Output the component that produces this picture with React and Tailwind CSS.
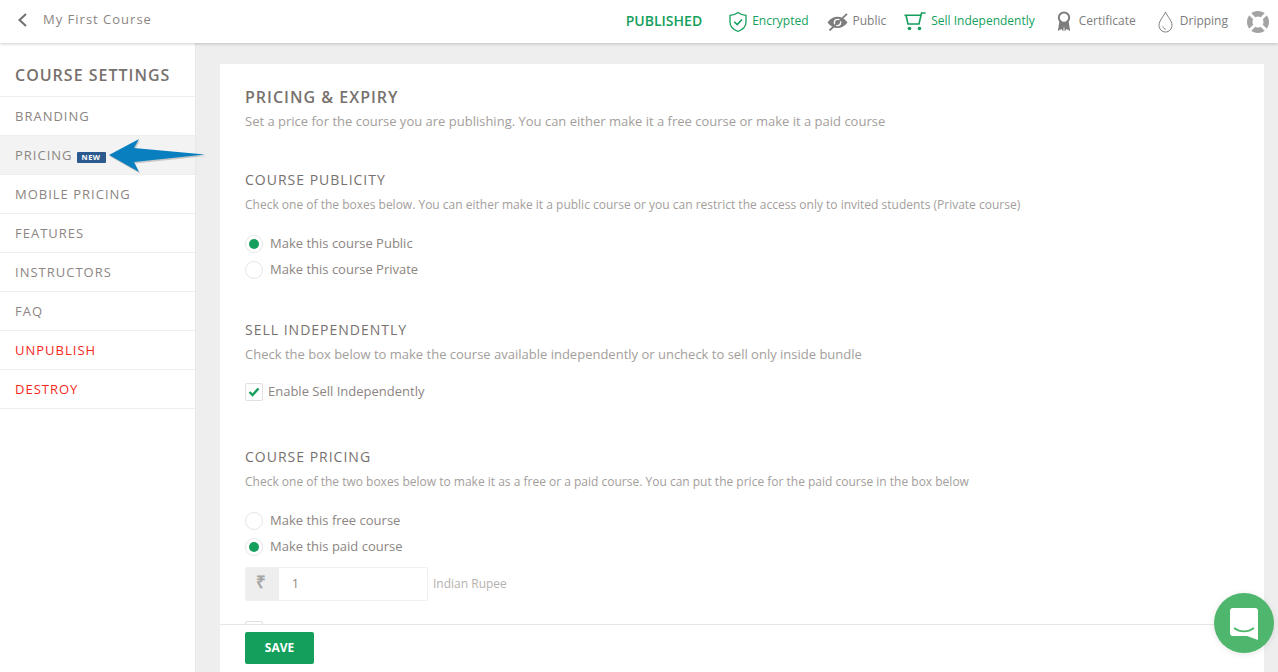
import React from 'react';

const GREEN = 'text-[#149f5c]';

const sideItems = [
  { label: 'BRANDING' },
  { label: 'PRICING', isNew: true, active: true },
  { label: 'MOBILE PRICING' },
  { label: 'FEATURES' },
  { label: 'INSTRUCTORS' },
  { label: 'FAQ' },
  { label: 'UNPUBLISH', danger: true },
  { label: 'DESTROY', danger: true },
];

const ShieldIcon = () => (
  <svg width="20" height="22" viewBox="0 0 20 22" fill="none" stroke="#149f5c" strokeWidth="1.3">
    <path d="M10 1.5 C7.5 3.5 5 4.2 2 4.4 V11 C2 15.5 5.5 18.8 10 20.5 C14.5 18.8 18 15.5 18 11 V4.4 C15 4.2 12.5 3.5 10 1.5 Z" />
    <path d="M6.2 10.8 L9.2 13.6 L14 8.4" strokeWidth="1.5" />
  </svg>
);

const EyeOffIcon = () => (
  <svg width="21" height="18" viewBox="0 0 21 18" fill="none">
    <path d="M0.5 9.5 C3.5 5.5 7 3.8 10.5 3.8 C14 3.8 17.5 5.5 20.5 9.5 C17.5 13.5 14 15 10.5 15 C7 15 3.5 13.5 0.5 9.5 Z" fill="#7d7d7d" />
    <circle cx="10.5" cy="9.5" r="3.8" fill="#fff" />
    <circle cx="10.5" cy="9.5" r="2.4" fill="#7d7d7d" />
    <path d="M2.5 17.5 L20 0.8" stroke="#7d7d7d" strokeWidth="1.8" />
  </svg>
);

const CartIcon = () => (
  <svg width="22" height="19" viewBox="0 0 22 19" fill="none" stroke="#149f5c" strokeWidth="1.6">
    <path d="M0.5 3.2 H17 L15 12 H4 L2 3.2" />
    <path d="M16.8 3.2 L17.6 1 H21.5" />
    <circle cx="5.5" cy="16.5" r="1.8" fill="#149f5c" stroke="none" />
    <circle cx="15.5" cy="16.5" r="1.8" fill="#149f5c" stroke="none" />
  </svg>
);

const RibbonIcon = () => (
  <svg width="14" height="21" viewBox="0 0 14 21" fill="none">
    <path d="M2.5 10 L0.8 20 L4.4 18 L6.2 20.6 L7 15 L7.8 20.6 L9.6 18 L13.2 20 L11.5 10 Z" fill="#7d7d7d" />
    <circle cx="7" cy="6.6" r="5.2" fill="#fff" stroke="#7d7d7d" strokeWidth="2" />
  </svg>
);

const DropIcon = () => (
  <svg width="15" height="22" viewBox="0 0 15 22" fill="none" stroke="#7d7d7d" strokeWidth="1">
    <path d="M7.5 1 C6 5 1 9.5 1 14.2 C1 18 4 21 7.5 21 C11 21 14 18 14 14.2 C14 9.5 9 5 7.5 1 Z" />
    <path d="M4.8 15.5 C5.2 17 6.2 18 7.8 18.2" />
  </svg>
);

const LifebuoyIcon = () => (
  <svg width="22" height="22" viewBox="0 0 22 22" fill="none">
    <circle cx="11" cy="11" r="8.25" stroke="#a3a3a3" strokeWidth="5.5" />
    <path d="M3 3 L7.5 7.5 M19 3 L14.5 7.5 M3 19 L7.5 14.5 M19 19 L14.5 14.5" stroke="#fff" strokeWidth="3" />
  </svg>
);

const Status = ({ icon, label, green, className }) => (
  <div className={`flex items-center ${className}`}>
    {icon}
    <span className={`mb-[2px] text-[12px] leading-none ${green ? GREEN : 'text-[#7d7d7d]'}`}>{label}</span>
  </div>
);

const Radio = ({ checked, label }) => (
  <label className="flex items-center h-[26px]">
    <span className="flex items-center justify-center w-[18px] h-[18px] mr-[7px] bg-white border border-[#e6e6e6] rounded-full">
      {checked && <span className="w-[10px] h-[10px] bg-[#149f5c] rounded-full" />}
    </span>
    <span className="text-[13px] text-[#8c8582]">{label}</span>
  </label>
);

const Section = ({ title, desc, descSize = 'mt-[6px] text-[12px]', className, children }) => (
  <section className={className}>
    <h2 className="text-[14px] leading-[20px] tracking-[1px] text-[#77716e]">{title}</h2>
    <p className={`leading-[18px] text-[#a39e9b] ${descSize}`}>{desc}</p>
    {children}
  </section>
);

export default function App() {
  return (
    <div className="relative flex flex-col h-[672px] overflow-hidden bg-[#eeeeee] font-['Open_Sans',sans-serif]">
      {/* Top bar */}
      <header className="z-10 flex items-center shrink-0 h-[43px] bg-white shadow-[0_1px_3px_rgba(0,0,0,0.2)]">
        <svg className="ml-[17px] mb-[4px]" width="11" height="14" viewBox="0 0 11 14" fill="none" stroke="#6f6f6f" strokeWidth="2">
          <path d="M9 1 L2.5 7 L9 13" />
        </svg>
        <span className="ml-[15px] mb-[4px] text-[13px] tracking-[1px] text-[#8c8582]">My First Course</span>
        <div className="flex items-center ml-auto pr-[9px]">
          <span className={`mr-[26px] mb-[2px] text-[14px] font-semibold ${GREEN}`}>PUBLISHED</span>
          <Status icon={<ShieldIcon />} label="Encrypted" green className="gap-[4px] mr-[18px]" />
          <Status icon={<EyeOffIcon />} label="Public" className="gap-[5px] mr-[18px]" />
          <Status icon={<CartIcon />} label="Sell Independently" green className="gap-[5px] mr-[22px]" />
          <Status icon={<RibbonIcon />} label="Certificate" className="gap-[8px] mr-[22px]" />
          <Status icon={<DropIcon />} label="Dripping" className="gap-[7px] mr-[19px]" />
          <LifebuoyIcon />
        </div>
      </header>

      <div className="flex flex-1 min-h-0">
        {/* Sidebar */}
        <aside className="shrink-0 w-[196px] bg-white border-r border-[#e8e8e8]">
          <h1 className="pt-[21px] pb-[10px] pl-[15px] text-[16px] leading-[22px] font-semibold tracking-[1px] text-[#77716e]">
            COURSE SETTINGS
          </h1>
          <ul className="border-t border-[#eeeeee]">
            {sideItems.map((item) => (
              <li
                key={item.label}
                className={`flex items-center h-[39px] pl-[15px] pt-[2px] border-b border-[#eeeeee] ${item.active ? 'bg-[#f3f3f3]' : ''}`}
              >
                <span className={`text-[13px] tracking-[1px] ${item.danger ? 'text-[#f5281e]' : 'text-[#8c8582]'}`}>
                  {item.label}
                </span>
                {item.isNew && (
                  <span className="ml-[4px] mt-[3px] px-[5px] rounded-[1px] bg-[#2d5a8e] text-[7.5px] leading-[11px] font-bold tracking-[0.5px] text-white">
                    NEW
                  </span>
                )}
              </li>
            ))}
          </ul>
        </aside>

        {/* Main card */}
        <main className="flex-1 min-w-0 pt-[21px] pl-[24px] pr-[14px]">
          <div className="h-full bg-white pt-[22px] px-[25px]">
            <h2 className="text-[16px] leading-[22px] font-semibold tracking-[1px] text-[#77716e]">PRICING &amp; EXPIRY</h2>
            <p className="mt-[4px] text-[13px] leading-[18px] text-[#a39e9b]">
              Set a price for the course you are publishing. You can either make it a free course or make it a paid course
            </p>

            <Section
              className="mt-[40px]"
              title="COURSE PUBLICITY"
              desc="Check one of the boxes below. You can either make it a public course or you can restrict the access only to invited students (Private course)"
            >
              <div className="mt-[17px]">
                <Radio checked label="Make this course Public" />
                <Radio label="Make this course Private" />
              </div>
            </Section>

            <Section
              className="mt-[37px]"
              title="SELL INDEPENDENTLY"
              descSize="mt-[5px] text-[13px]"
              desc="Check the box below to make the course available independently or uncheck to sell only inside bundle"
            >
              <label className="flex items-center mt-[19px]">
                <span className="flex items-center justify-center w-[18px] h-[18px] mr-[5px] border border-[#e0e0e0] rounded-[2px]">
                  <svg width="12" height="10" viewBox="0 0 12 10" fill="none" stroke="#149f5c" strokeWidth="2.4">
                    <path d="M1.5 5 L4.5 8 L10.5 1.5" />
                  </svg>
                </span>
                <span className="text-[13px] text-[#8c8582]">Enable Sell Independently</span>
              </label>
            </Section>

            <Section
              className="mt-[45px]"
              title="COURSE PRICING"
              desc="Check one of the two boxes below to make it as a free or a paid course. You can put the price for the paid course in the box below"
            >
              <div className="mt-[17px]">
                <Radio label="Make this free course" />
                <Radio checked label="Make this paid course" />
              </div>
              <div className="flex items-center mt-[7px]">
                <div className="flex h-[34px] w-[183px] border border-[#f0f0f0] rounded-[2px]">
                  <span className="flex items-center justify-center w-[33px] pb-[3px] pr-[3px] bg-[#eeeeee] text-[17px] font-bold text-[#a5a5a5]">₹</span>
                  <span className="flex items-center pl-[13px] text-[12px] text-[#8c8582]">1</span>
                </div>
                <span className="ml-[5px] text-[12px] text-[#b5b1ae]">Indian Rupee</span>
              </div>
              <div className="mt-[20px] w-[18px] h-[18px] border border-[#e0e0e0] rounded-[2px]" />
            </Section>
          </div>
        </main>
      </div>

      {/* Save bar */}
      <div className="absolute left-[220px] right-[14px] bottom-0 h-[48px] pt-[7px] pl-[25px] bg-white border-t border-[#e6e6e6]">
        <button className="w-[69px] h-[32px] rounded-[2px] bg-[#149f5c] text-[12px] font-bold text-white">SAVE</button>
      </div>

      {/* Annotation arrow */}
      <svg className="absolute left-[105px] top-[135px]" width="104" height="40" viewBox="0 0 104 40">
        <path d="M4 20 L34 4 L29 13 L100 19.5 L29 27 L34 37 Z" fill="#a9a9a9" transform="translate(1 1.5)" opacity="0.6" />
        <path d="M4 20 L34 4 L29 13 L100 19.5 L29 27 L34 37 Z" fill="#0a7fc0" />
      </svg>

      {/* Chat launcher */}
      <div className="absolute left-[1214px] top-[593px] flex items-center justify-center w-[60px] h-[60px] rounded-full bg-[#4fb76d] shadow-[0_1px_6px_rgba(0,0,0,0.1)]">
        <svg className="mt-[2px]" width="28" height="32" viewBox="0 0 28 32">
          <path d="M3 0 H25 A3 3 0 0 1 28 3 V32 L17 28 H3 A3 3 0 0 1 0 25 V3 A3 3 0 0 1 3 0 Z" fill="#fff" />
          <path d="M4 20 C10 24.5 18 24.5 24 20" fill="none" stroke="#4fb76d" strokeWidth="1.6" />
        </svg>
      </div>
    </div>
  );
}
